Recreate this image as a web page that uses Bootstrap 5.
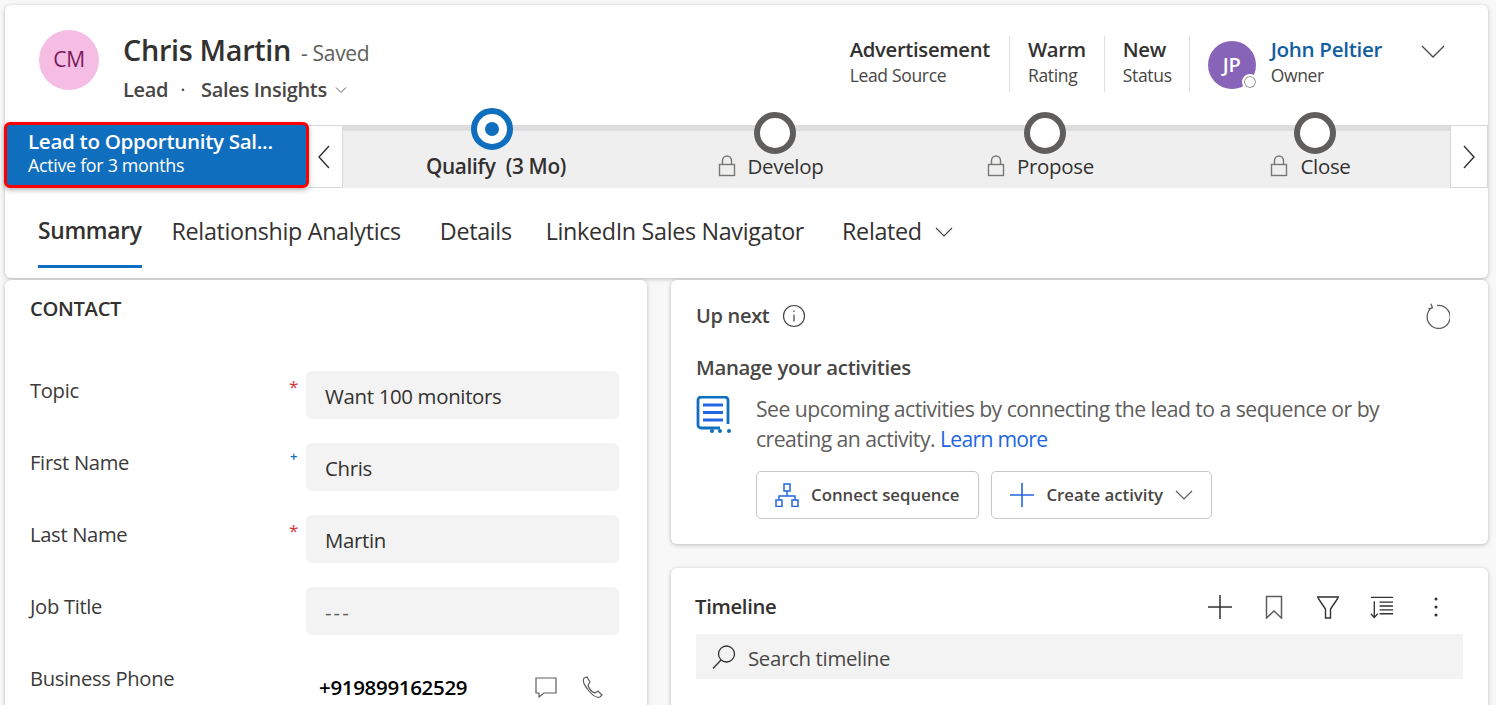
<!doctype html>
<html lang="en"><head><meta charset="utf-8"><title>Chris Martin</title>
<link href="https://cdn.jsdelivr.net/npm/bootstrap@5.3.0/dist/css/bootstrap.min.css" rel="stylesheet">
<style>
html,body{height:705px;overflow:hidden}
body{background:#f8f8f8;font-family:"Open Sans","Liberation Sans",sans-serif;color:#323130;padding:5px 8px 0 5px;letter-spacing:-.02em}
svg{display:block;flex:none}
.hdr{height:273px;background:#fff;border-radius:6px;box-shadow:0 1px 4px rgba(0,0,0,.25);margin-bottom:2px}
.hdr-top{height:120px;padding:25px 43px 0 34px}
.ava{width:60px;height:60px;border-radius:50%;background:#f5bde3;color:#7a1a5e;font-size:21px;font-weight:500;display:flex;align-items:center;justify-content:center;margin-right:24px}
.rec-name{font-size:28.8px;font-weight:600;line-height:40px;color:#323130}
.rec-saved{font-size:21px;color:#605e5c;margin-left:10px}
.rec-sub{font-size:20px;font-weight:600;line-height:28px;margin-top:6px;color:#484644}
.rec-dot{margin:0 16px 0 12px;font-weight:400}
.stat{height:56px;margin-top:6px;padding:0 19px 0 18px;border-right:1px solid #e1dfdd}
.stat-warm{padding-right:18px}
.stat-new{padding-right:17px}
.stat-v{font-size:20.3px;font-weight:600;line-height:28px;color:#323130;margin-top:-1px}
.stat-l{font-size:17.5px;line-height:24px;color:#484644}
.ava2{width:48px;height:48px;border-radius:50%;background:#8764b8;color:#fff;font-size:20px;font-weight:600;display:flex;align-items:center;justify-content:center;margin:11px 15px 0 18px;position:relative}
.presence{position:absolute;right:-2px;bottom:-1px;width:16px;height:16px;border-radius:50%;background:#fff;border:2px solid #fff;box-shadow:inset 0 0 0 1px #8a8886}
.own-n{font-size:20.6px;line-height:28px;font-weight:600;color:#115ea3;margin-top:-1px}
.bpf{height:63px;display:flex}
.bpf-active{width:305px;height:66px;margin:-3px 0 0 -1px;background:#106ebe;border:3px solid #f00;border-radius:6px;color:#fff;padding:3px 21px;box-shadow:0 2px 5px rgba(0,0,0,.3);flex:none;position:relative}
.bpf-t{font-size:20.6px;font-weight:600;line-height:27px;white-space:nowrap}
.bpf-s{font-size:17.9px;line-height:21px}
.bpf-nav{width:34px;flex:none;background:#fff;border:1px solid #d8d8d8;display:flex;align-items:center;justify-content:center}
.bpf-left{border-left:0}
.bpf-left svg{margin-right:3px}
.bpf-right{width:38px}
.track{flex:1;display:flex;background:#efefef;border-top:6px solid #ddd}
.stage{width:270px;display:flex;flex-direction:column;align-items:center;flex:none}
.stage1{width:297px}
.ring{width:42px;height:42px;border-radius:50%;background:#fff;border:6px solid #605e5c;margin-top:-19px;display:flex;align-items:center;justify-content:center}
.ring-on{border-color:#106ebe;margin-top:-23px}
.ring-on::after{content:"";width:14px;height:14px;border-radius:50%;background:#106ebe}
.stage-l{font-size:20.5px;line-height:28px;margin-top:-2px;display:flex;align-items:center;gap:12px;color:#323130;margin-left:-9px}
.stage1 .stage-l{font-size:20.8px;font-weight:600;margin:2px 0 0 9px}
.tabs{height:90px;padding-left:33px}
.tabs .nav-link{padding:10px 0 0;color:#323130;font-size:23.3px;height:80px;border-bottom:3px solid transparent;display:flex;gap:13px;align-items:center}
.tabs .nav-link.active{font-size:22.8px;font-weight:600;color:#323130;border-bottom-color:#106ebe}
.tab-a{margin-right:30px}.tab-b{margin-right:39px}.tab-c{margin-right:34px}.tab-d{margin-right:38px}
.cols{gap:24px;align-items:flex-start}
.pane-l{width:642px;height:430px;background:#fff;border-radius:6px;border:0;box-shadow:0 1px 4px rgba(0,0,0,.25);padding:14px 28px 0 25px}
.sec-h{font-size:20.200px;font-weight:600;line-height:28px;margin-bottom:49px;color:#323130}
.frow{height:48px;margin-bottom:24px;display:flex}
.flab{width:251px;font-size:20.2px;line-height:38px;color:#3b3a39;flex:none}
.fmark{width:25px;font-size:17px;line-height:32px;color:#d13438;flex:none;text-align:center}
.fmark-b{color:#106ebe;font-size:13px;font-weight:600;line-height:26px}
.fval{flex:1;background:#f3f3f3;border-radius:6px;padding:0 19px;font-size:20.4px;line-height:50px;color:#323130}
.fval-e{color:#605e5c;letter-spacing:.1em}
.fphone{flex:1;display:flex;align-items:center;padding-left:13px;font-size:20.5px;font-weight:600;color:#000;height:42px;margin-top:7px}
.fchat{margin-right:23px}.fcall{margin-right:16px}
.pane-r{width:817px}
.rcard{background:#fff;border-radius:6px;border:0;box-shadow:0 1px 4px rgba(0,0,0,.25)}
.upn{height:264px;margin-bottom:24px;padding:20px 25px 0 25px}
.upn-t{font-size:20px;font-weight:600;line-height:32px;color:#484644}
.i-info{margin-left:13px}
.i-refresh{margin-left:auto;margin-right:13px}
.upn-h{font-size:20.4px;font-weight:600;line-height:28px;margin:21px 0 13px;color:#484644}
.i-act{margin:2px 24px 0 0}
.upn-p{font-size:21.2px;line-height:30px;color:#605e5c;margin:0;letter-spacing:-.025em}
.upn-p a{color:#2266e3;text-decoration:none;letter-spacing:-.035em}
.btn-row{gap:12px;margin-top:17px}
.gbtn{height:48px;border:1px solid #c8c6c4;background:#fff;border-radius:5px;font-size:16.8px;font-weight:600;color:#484644;display:flex;align-items:center;padding:0 18px;gap:12px}
.gbtn-a{padding-right:19px}
.tl{height:160px;padding:22px 25px 0 25px}
.tl-t{font-size:20.3px;font-weight:600;line-height:32px;padding-bottom:2px;color:#323130;margin-left:-1px}
.m33{margin-left:33px}.m29{margin-left:29px}.mdots{margin:0 23px 0 38px}
.srch{height:45px;background:#f3f3f3;margin-top:10px;padding-left:16px;font-size:20.4px;color:#484644;display:flex;align-items:center;gap:12px}
.srch span{padding-top:3px}
.chev-hdr{margin:15px 0 0 39px}
.own{margin-top:6px}
</style></head><body>
<div class="hdr">
  <div class="hdr-top d-flex">
    <div class="ava">CM</div>
    <div class="flex-grow-1">
      <div class="d-flex align-items-baseline"><span class="rec-name">Chris Martin</span><span class="rec-saved">- Saved</span></div>
      <div class="rec-sub d-flex align-items-center"><span>Lead</span><span class="rec-dot">·</span><span>Sales Insights</span>
        <svg class="ms-2" width="12" height="8" viewBox="0 0 12 8" fill="none" stroke="#605e5c"><path d="M1 1.500l5 5 5-5"/></svg></div>
    </div>
    <div class="d-flex">
      <div class="stat"><div class="stat-v">Advertisement</div><div class="stat-l">Lead Source</div></div>
      <div class="stat stat-warm"><div class="stat-v">Warm</div><div class="stat-l">Rating</div></div>
      <div class="stat stat-new"><div class="stat-v">New</div><div class="stat-l">Status</div></div>
      <div class="ava2">JP<span class="presence"></span></div>
      <div class="own"><div class="own-n">John Peltier</div><div class="stat-l">Owner</div></div>
      <svg class="chev-hdr" width="24" height="14" viewBox="0 0 24 14" fill="none" stroke="#484644" stroke-width="1.3"><path d="M1 1l11 11L23 1"/></svg>
    </div>
  </div>
  <div class="bpf">
    <div class="bpf-active"><div class="bpf-t">Lead to Opportunity Sal...</div><div class="bpf-s">Active for 3 months</div></div>
    <div class="bpf-nav bpf-left"><svg width="14" height="24" viewBox="0 0 14 24" fill="none" stroke="#323130" stroke-width="1.4"><path d="M12 1L2 12l10 11"/></svg></div>
    <div class="track">
      <div class="stage stage1"><div class="ring ring-on"></div><div class="stage-l"><span>Qualify&nbsp; (3 Mo)</span></div></div>
      <div class="stage"><div class="ring"></div><div class="stage-l"><svg width="18" height="22" viewBox="0 0 18 22" fill="none" stroke="#797775" stroke-width="1.4"><rect x="1.500" y="9.500" width="15" height="11"/><path d="M4.500 9.500V5.500a4.500 4.500 0 0 1 9 0v4"/></svg><span>Develop</span></div></div>
      <div class="stage"><div class="ring"></div><div class="stage-l"><svg width="18" height="22" viewBox="0 0 18 22" fill="none" stroke="#797775" stroke-width="1.4"><rect x="1.500" y="9.500" width="15" height="11"/><path d="M4.500 9.500V5.500a4.500 4.500 0 0 1 9 0v4"/></svg><span>Propose</span></div></div>
      <div class="stage"><div class="ring"></div><div class="stage-l"><svg width="18" height="22" viewBox="0 0 18 22" fill="none" stroke="#797775" stroke-width="1.4"><rect x="1.500" y="9.500" width="15" height="11"/><path d="M4.500 9.500V5.500a4.500 4.500 0 0 1 9 0v4"/></svg><span>Close</span></div></div>
    </div>
    <div class="bpf-nav bpf-right"><svg width="14" height="24" viewBox="0 0 14 24" fill="none" stroke="#323130" stroke-width="1.4"><path d="M2 1l10 11L2 23"/></svg></div>
  </div>
  <nav class="nav tabs">
    <a class="nav-link active tab-a" href="#">Summary</a>
    <a class="nav-link tab-b" href="#">Relationship Analytics</a>
    <a class="nav-link tab-c" href="#">Details</a>
    <a class="nav-link tab-d" href="#">LinkedIn Sales Navigator</a>
    <a class="nav-link" href="#">Related <svg width="18" height="10" viewBox="0 0 18 10" fill="none" stroke="#484644" stroke-width="1.2"><path d="M1 1l8 8 8-8"/></svg></a>
  </nav>
</div>
<div class="d-flex cols">
  <div class="pane-l card">
    <div class="sec-h">CONTACT</div>
    <div class="frow"><div class="flab">Topic</div><div class="fmark">*</div><div class="fval">Want 100 monitors</div></div>
    <div class="frow"><div class="flab">First Name</div><div class="fmark fmark-b">+</div><div class="fval">Chris</div></div>
    <div class="frow"><div class="flab">Last Name</div><div class="fmark">*</div><div class="fval">Martin</div></div>
    <div class="frow"><div class="flab">Job Title</div><div class="fmark"></div><div class="fval fval-e">---</div></div>
    <div class="frow"><div class="flab">Business Phone</div><div class="fmark"></div><div class="fphone"><span class="flex-grow-1">+919899162529</span>
      <svg class="fchat" width="24" height="24" viewBox="0 0 24 24" fill="none" stroke="#605e5c" stroke-width="1.2"><path d="M2 3h20v15H10l-5 4v-4H2z"/></svg>
      <svg class="fcall" width="22" height="24" viewBox="0 0 22 24" fill="none" stroke="#605e5c" stroke-width="1.2"><path d="M3 3l3-1 3 5-2 3c1 4 4 7 7 8l3-2 4 4-2 2c-3 1-7-1-11-6S1 7 3 3z"/></svg></div></div>
  </div>
  <div class="pane-r">
    <div class="rcard card upn">
      <div class="d-flex align-items-center"><span class="upn-t">Up next</span>
        <svg class="i-info" width="24" height="24" viewBox="0 0 24 24" fill="none" stroke="#484644" stroke-width="1.2"><circle cx="12" cy="12" r="10.500"/><path d="M12 10.500v7M12 6.500v1.600"/></svg>
        <svg class="i-refresh" width="26" height="26" viewBox="0 0 26 26" fill="none" stroke="#605e5c" stroke-width="1.3"><path d="M8 4.500A11.500 11.500 0 1 0 13 2.500M7 .8l1.400 4-4 1"/></svg>
      </div>
      <div class="upn-h">Manage your activities</div>
      <div class="d-flex">
        <svg class="i-act" width="36" height="38" viewBox="0 0 36 38" fill="none"><path d="M24 32H5a3 3 0 0 1-3-3V4a3 3 0 0 1 3-3h24a3 3 0 0 1 3 3v24" stroke="#106ebe" stroke-width="2.800"/><path d="M7 9h20M7 16.500h20M7 24h20" stroke="#2266e3" stroke-width="2.800"/><circle cx="16" cy="35" r="2" fill="#106ebe"/><circle cx="24" cy="35" r="2" fill="#106ebe"/><circle cx="33" cy="35" r="2" fill="#106ebe"/></svg>
        <div>
          <p class="upn-p">See upcoming activities by connecting the lead to a sequence or by<br>creating an activity. <a href="#">Learn more</a></p>
          <div class="d-flex btn-row">
            <button class="btn gbtn gbtn-a"><svg width="24" height="24" viewBox="0 0 24 24" fill="none" stroke="#2266e3" stroke-width="1.500"><rect x="9" y="1" width="6" height="7"/><rect x="1" y="17" width="6" height="6.500"/><rect x="17" y="17" width="6" height="6.500"/><path d="M12 8v5M4 17v-4h16v4"/></svg>Connect sequence</button>
            <button class="btn gbtn"><svg width="24" height="24" viewBox="0 0 24 24" fill="none" stroke="#2266e3" stroke-width="1.600"><path d="M12 0v24M0 12h24"/></svg>Create activity<svg width="18" height="10" viewBox="0 0 18 10" fill="none" stroke="#605e5c" stroke-width="1.200"><path d="M1 1l8 8 8-8"/></svg></button>
          </div>
        </div>
      </div>
    </div>
    <div class="rcard card tl">
      <div class="d-flex align-items-center"><span class="tl-t flex-grow-1">Timeline</span>
        <svg width="24" height="24" viewBox="0 0 24 24" fill="none" stroke="#323130" stroke-width="1.500"><path d="M12 0v24M0 12h24"/></svg>
        <svg class="m33" width="18" height="24" viewBox="0 0 18 24" fill="none" stroke="#605e5c" stroke-width="1.500"><path d="M1.500 1.500h15V23L9 16l-7.500 7z"/></svg>
        <svg class="m33" width="24" height="24" viewBox="0 0 24 24" fill="none" stroke="#323130" stroke-width="1.400"><path d="M1 2h22M2 3l7.500 11v9h5v-9L22 3"/></svg>
        <svg class="m29" width="25" height="24" viewBox="0 0 26 24" fill="none" stroke="#323130" stroke-width="1.400"><path d="M2 2h23M5.500 6v17M2 19l3.500 4 3.500-4M11 7h14M11 11h14M11 15h14M11 19h14"/></svg>
        <svg class="mdots" width="8" height="24" viewBox="0 0 8 24" fill="#323130"><circle cx="4" cy="4" r="1.500"/><circle cx="4" cy="12" r="1.500"/><circle cx="4" cy="20" r="1.500"/></svg>
      </div>
      <div class="srch"><svg width="24" height="24" viewBox="0 0 24 24" fill="none" stroke="#323130" stroke-width="1.300"><circle cx="14.500" cy="9" r="8"/><path d="M9 15L1 23.500"/></svg><span>Search timeline</span></div>
    </div>
  </div>
</div>
<script src="https://cdn.jsdelivr.net/npm/bootstrap@5.3.0/dist/js/bootstrap.bundle.min.js"></script>
</body></html>
